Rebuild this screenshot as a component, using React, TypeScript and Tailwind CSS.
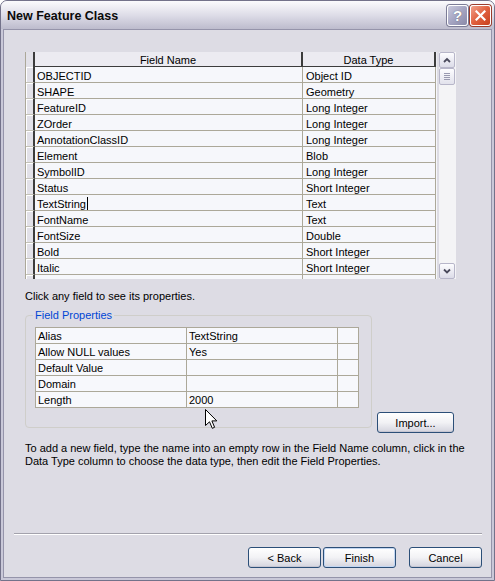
import React from 'react'

const fields: [string, string][] = [
  ['OBJECTID', 'Object ID'],
  ['SHAPE', 'Geometry'],
  ['FeatureID', 'Long Integer'],
  ['ZOrder', 'Long Integer'],
  ['AnnotationClassID', 'Long Integer'],
  ['Element', 'Blob'],
  ['SymbolID', 'Long Integer'],
  ['Status', 'Short Integer'],
  ['TextString', 'Text'],
  ['FontName', 'Text'],
  ['FontSize', 'Double'],
  ['Bold', 'Short Integer'],
  ['Italic', 'Short Integer'],
  ['', ''],
]

const props: [string, string][] = [
  ['Alias', 'TextString'],
  ['Allow NULL values', 'Yes'],
  ['Default Value', ''],
  ['Domain', ''],
  ['Length', '2000'],
]

function XpButton({ label, isDefault = false, className = '' }: { label: string; isDefault?: boolean; className?: string }) {
  return (
    <button
      className={
        'h-[21px] w-[73px] rounded-[3px] border border-[#2c4f78] bg-gradient-to-b from-[#ffffff] via-[#f2f2f5] to-[#d4d4de] pt-px text-[11px] leading-none text-black ' +
        (isDefault ? 'shadow-[inset_0_0_0_1px_#c2d6f2] ' : 'shadow-[inset_0_-1px_0_#c6c6d2] ') +
        className
      }
    >
      {label}
    </button>
  )
}

function ScrollArrow({ up }: { up: boolean }) {
  return (
    <div className="flex h-[16px] w-[16px] items-center justify-center rounded-[2px] border border-[#b7b6c9] bg-gradient-to-b from-[#fdfdff] to-[#dcdce8]">
      <svg width="8" height="6" viewBox="0 0 8 6">
        <path d={up ? 'M1 5 L4 2 L7 5' : 'M1 1.5 L4 4.5 L7 1.5'} stroke="#4a4a5c" strokeWidth="1.8" fill="none" />
      </svg>
    </div>
  )
}

export default function App() {
  return (
    <div
      className="relative flex h-[581px] w-[495px] flex-col overflow-hidden rounded-t-[7px] border border-[#73728a] bg-[#c9c8d8] text-black"
      style={{ fontFamily: '"Liberation Sans", Arial, sans-serif' }}
    >
      {/* Title bar */}
      <div className="flex h-[28px] shrink-0 items-center bg-gradient-to-b from-[#fbfbfd] via-[#dedde8] to-[#bdbccd] pl-[6px] pr-[3px]">
        <span className="pt-[2px] text-[12.5px] font-bold text-[#0a0a0a]">New Feature Class</span>
        <div className="ml-auto flex gap-[2px]">
          <div className="flex h-[21px] w-[21px] items-center justify-center rounded-[3px] border border-white bg-gradient-to-br from-[#c9c9dc] via-[#a5a5c2] to-[#8a8aa8] shadow-[0_0_0_1px_#7c7c96]">
            <span className="text-[15px] font-bold leading-none text-white [text-shadow:0_0_1px_#555]">?</span>
          </div>
          <div className="flex h-[21px] w-[21px] items-center justify-center rounded-[3px] border border-white bg-gradient-to-br from-[#f0a08a] via-[#e0603e] to-[#c8401e] shadow-[0_0_0_1px_#9c3c2c]">
            <svg width="11" height="11" viewBox="0 0 11 11">
              <path d="M1.5 1.5 L9.5 9.5 M9.5 1.5 L1.5 9.5" stroke="white" strokeWidth="2.2" strokeLinecap="square" />
            </svg>
          </div>
        </div>
      </div>

      {/* Client area */}
      <div className="mx-[2px] mb-[2px] flex flex-1 flex-col border border-[#9594aa] bg-[#dddce4] pb-[9px] pl-[10px] pr-[9px] pt-[22px] text-[11px] leading-[13px]">
        <div className="ml-[11px] flex flex-col">
          {/* Fields grid + scrollbar */}
          <div className="flex">
            <div className="h-[227px] w-[412px] overflow-hidden border-l border-[#aca899] bg-[#f6f7fb]">
              <div className="flex h-[15px] bg-[#ecebf1]">
                <div className="w-[9px] border-r-2 border-[#3c3c3c] bg-[#e2e1e8]" />
                <div className="flex w-[268px] justify-center border-b border-r-2 border-[#3c3c3c] pt-[2px]">Field Name</div>
                <div className="flex w-[133px] justify-center border-b border-r-2 border-[#3c3c3c] pt-[2px]">Data Type</div>
              </div>
              {fields.map(([name, type], i) => (
                <div key={i} className="flex h-[16px]">
                  <div className="w-[9px] border-b border-r-2 border-b-[#c4c2b8] border-r-[#3c3c3c] bg-[#e2e1e8] shadow-[inset_1px_1px_0_#ffffff]" />
                  <div className="flex w-[268px] items-start border-b border-r border-[#aca899] pl-[2px] pt-[3px]">
                    {name}
                    {name === 'TextString' && <span className="ml-px inline-block h-[13px] w-px -translate-y-[1px] bg-black" />}
                  </div>
                  <div className="flex w-[133px] items-start border-b border-r border-[#aca899] pl-[3px] pt-[3px]">{type}</div>
                </div>
              ))}
            </div>
            <div className="ml-[2px] flex h-[227px] w-[17px] flex-col bg-[#f4f4f6]">
              <ScrollArrow up />
              <div className="flex h-[17px] w-[16px] items-center justify-center rounded-[2px] border border-[#b7b6c9] bg-gradient-to-b from-[#fdfdff] to-[#e2e2ec]">
                <div className="flex flex-col gap-[1px]">
                  <div className="h-px w-[6px] bg-[#9a9ab0]" />
                  <div className="h-px w-[6px] bg-[#9a9ab0]" />
                  <div className="h-px w-[6px] bg-[#9a9ab0]" />
                  <div className="h-px w-[6px] bg-[#9a9ab0]" />
                </div>
              </div>
              <div className="flex-1" />
              <ScrollArrow up={false} />
            </div>
          </div>

          <p className="mt-[11px]">Click any field to see its properties.</p>

          <div className="mt-[5px] flex items-start">
            <fieldset className="h-[120px] w-[347px] rounded-[4px] border border-[#cfceca] pl-[9px]">
              <legend className="-ml-[2px] px-[2px] pt-[1px] text-[#0046d5]">Field Properties</legend>
              <div className="mt-[5px] w-[324px] border-l border-t border-[#aca899] bg-[#f7f8fc]">
                {props.map(([label, value], i) => (
                  <div key={i} className="flex h-[16px]">
                    <div className="flex w-[151px] items-start border-b border-r border-[#aca899] pl-[2px] pt-[2px]">{label}</div>
                    <div className="flex w-[151px] items-start border-b border-r border-[#aca899] pl-[2px] pt-[2px]">{value}</div>
                    <div className="w-[21px] border-b border-r border-[#aca899]" />
                  </div>
                ))}
              </div>
            </fieldset>
            <XpButton label="Import..." className="ml-[5px] mt-[104px] w-[77px]" />
          </div>

          <p className="mt-[9px] w-[440px]">
            To add a new field, type the name into an empty row in the Field Name column, click in the Data Type column to choose the data type, then edit the Field Properties.
          </p>
        </div>

        <div className="mt-auto h-[2px] border-b border-t border-b-white border-t-[#a3a2ac]" />

        <div className="mt-[12px] flex justify-end">
          <XpButton label="< Back" />
          <XpButton label="Finish" isDefault className="ml-[2px]" />
          <XpButton label="Cancel" className="ml-[13px]" />
        </div>
      </div>

      {/* Mouse pointer */}
      <svg className="absolute left-[204px] top-[408px]" width="13" height="21" viewBox="0 0 13 21">
        <path d="M0.5 0.5 L0.5 16.5 L4.5 12.8 L7.3 19.3 L9.6 18.3 L6.9 11.9 L11.8 11.9 Z" fill="white" stroke="black" strokeWidth="1" strokeLinejoin="miter" />
      </svg>
    </div>
  )
}
